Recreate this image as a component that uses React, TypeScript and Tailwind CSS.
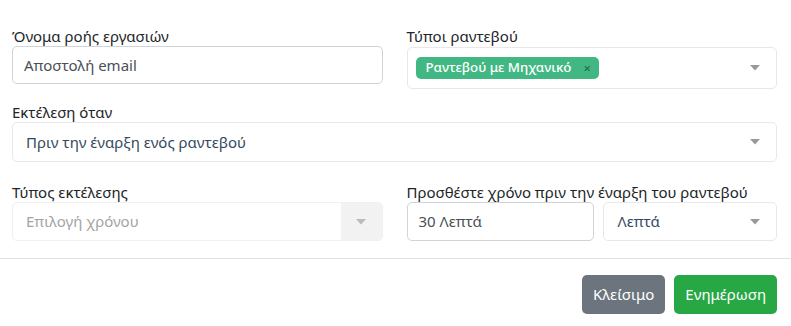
const Arrow = ({ className = '' }: { className?: string }) => (
  <svg width="10" height="6" viewBox="0 0 10 6" className={className}>
    <path d="M0 0h10L5 5.5z" fill="#999" />
  </svg>
);

export default function App() {
  const font = { fontFamily: '"Noto Sans", "Open Sans", sans-serif' };
  return (
    <div className="w-[791px] h-[326px] bg-white text-[#212529]" style={font}>
      <div className="pl-3 pr-[14px] pt-[26px]">
        {/* row 1 */}
        <div className="grid grid-cols-2 gap-x-6 items-start">
          <div>
            <div className="h-5 text-[15px] leading-5">Όνομα ροής εργασιών</div>
            <div className="h-[38px] border border-[#ced4da] rounded-[5px] flex items-center pl-[11px] text-[15px] text-[#495057]">
              Αποστολή email
            </div>
          </div>
          <div>
            <div className="h-5 text-[15px] leading-5">Τύποι ραντεβού</div>
            <div className="mt-px h-[42px] border border-[#e8e8e8] rounded-[5px] flex items-center pl-2 pr-4">
              <span className="h-[22px] bg-[#41b883] rounded-[5px] text-white text-[13.3px] font-medium flex items-center pl-[10px] pr-[8px] gap-3">
                Ραντεβού με Μηχανικό
                <span className="text-[#266d4d] text-[13px] leading-none">×</span>
              </span>
              <Arrow className="ml-auto" />
            </div>
          </div>
        </div>

        {/* row 2 */}
        <div className="mt-[13px]">
          <div className="h-5 text-[15px] leading-5">Εκτέλεση όταν</div>
          <div className="h-10 border border-[#e8e8e8] rounded-[5px] flex items-center pl-[13px] pr-4 text-[15px] text-[#35495e]">
            Πριν την έναρξη ενός ραντεβού
            <Arrow className="ml-auto" />
          </div>
        </div>

        {/* row 3 */}
        <div className="mt-5 grid grid-cols-2 gap-x-6 items-start">
          <div>
            <div className="h-5 text-[15px] leading-5">Τύπος εκτέλεσης</div>
            <div className="h-[39px] border border-[#f0f0f0] rounded-[5px] flex overflow-hidden">
              <div className="flex-1 flex items-center pl-[13px] text-[15px] text-[#a4a4a4]">Επιλογή χρόνου</div>
              <div className="w-[41px] bg-[#f2f2f2] flex items-center justify-center">
                <Arrow className="opacity-60" />
              </div>
            </div>
          </div>
          <div>
            <div className="h-5 text-[15px] leading-5 whitespace-nowrap">Προσθέστε χρόνο πριν την έναρξη του ραντεβού</div>
            <div className="flex gap-[9px]">
              <div className="w-[187px] h-[39px] border border-[#ced4da] rounded-[5px] flex items-center pl-[11px] text-[15px] text-[#495057]">
                30 Λεπτά
              </div>
              <div className="flex-1 h-[39px] border border-[#e8e8e8] rounded-[5px] flex items-center pl-[14px] pr-4 text-[15px] text-[#35495e]">
                Λεπτά
                <Arrow className="ml-auto" />
              </div>
            </div>
          </div>
        </div>
      </div>

      <div className="mt-[17px] border-t border-[#dee2e6]" />

      <div className="flex justify-end gap-[9px] pt-4 pr-[14px]">
        <button className="h-[39px] px-[11px] rounded-[5px] bg-[#6c757d] text-white text-[15px]">Κλείσιμο</button>
        <button className="h-[39px] px-[11px] rounded-[5px] bg-[#28a745] text-white text-[15px]">Ενημέρωση</button>
      </div>
    </div>
  );
}
